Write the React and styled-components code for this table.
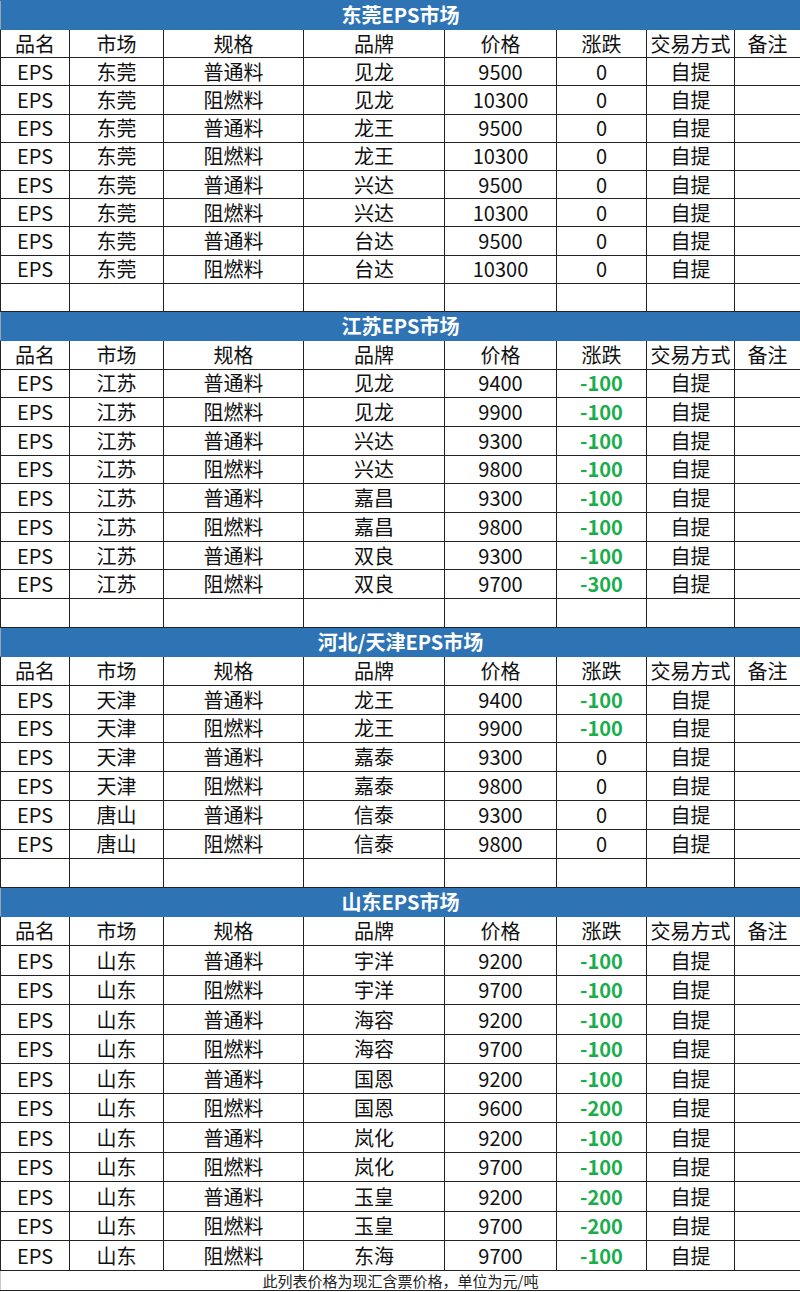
import React from 'react';
import styled, { createGlobalStyle } from 'styled-components';

const GlobalStyle = createGlobalStyle`
  html, body {
    margin: 0;
    padding: 0;
    background: #ffffff;
  }
  body {
    font-family: "Noto Sans CJK SC", "Noto Sans", sans-serif;
  }
`;

const COLS = [69, 94, 140, 141, 112, 90, 88, 66];
const HEAD = ['品名', '市场', '规格', '品牌', '价格', '涨跌', '交易方式', '备注'];

const sections = [
  {
    title: '东莞EPS市场',
    rowH: 28.2,
    rows: [
      ['东莞', '普通料', '见龙', '9500', '0'],
      ['东莞', '阻燃料', '见龙', '10300', '0'],
      ['东莞', '普通料', '龙王', '9500', '0'],
      ['东莞', '阻燃料', '龙王', '10300', '0'],
      ['东莞', '普通料', '兴达', '9500', '0'],
      ['东莞', '阻燃料', '兴达', '10300', '0'],
      ['东莞', '普通料', '台达', '9500', '0'],
      ['东莞', '阻燃料', '台达', '10300', '0'],
    ],
    blank: true,
  },
  {
    title: '江苏EPS市场',
    rowH: 28.7,
    rows: [
      ['江苏', '普通料', '见龙', '9400', '-100'],
      ['江苏', '阻燃料', '见龙', '9900', '-100'],
      ['江苏', '普通料', '兴达', '9300', '-100'],
      ['江苏', '阻燃料', '兴达', '9800', '-100'],
      ['江苏', '普通料', '嘉昌', '9300', '-100'],
      ['江苏', '阻燃料', '嘉昌', '9800', '-100'],
      ['江苏', '普通料', '双良', '9300', '-100'],
      ['江苏', '阻燃料', '双良', '9700', '-300'],
    ],
    blank: true,
  },
  {
    title: '河北/天津EPS市场',
    rowH: 28.9,
    rows: [
      ['天津', '普通料', '龙王', '9400', '-100'],
      ['天津', '阻燃料', '龙王', '9900', '-100'],
      ['天津', '普通料', '嘉泰', '9300', '0'],
      ['天津', '阻燃料', '嘉泰', '9800', '0'],
      ['唐山', '普通料', '信泰', '9300', '0'],
      ['唐山', '阻燃料', '信泰', '9800', '0'],
    ],
    blank: true,
  },
  {
    title: '山东EPS市场',
    rowH: 29.5,
    rows: [
      ['山东', '普通料', '宇洋', '9200', '-100'],
      ['山东', '阻燃料', '宇洋', '9700', '-100'],
      ['山东', '普通料', '海容', '9200', '-100'],
      ['山东', '阻燃料', '海容', '9700', '-100'],
      ['山东', '普通料', '国恩', '9200', '-100'],
      ['山东', '阻燃料', '国恩', '9600', '-200'],
      ['山东', '普通料', '岚化', '9200', '-100'],
      ['山东', '阻燃料', '岚化', '9700', '-100'],
      ['山东', '普通料', '玉皇', '9200', '-200'],
      ['山东', '阻燃料', '玉皇', '9700', '-200'],
      ['山东', '阻燃料', '东海', '9700', '-100'],
    ],
    blank: false,
  },
];

export default function App() {
  return (
    <>
      <GlobalStyle />
      <Sheet>
        <colgroup>
          {COLS.map((w, i) => <col key={i} style={{ width: w }} />)}
        </colgroup>
        {sections.map((s) => (
          <tbody key={s.title}>
            <TitleRow>
              <TitleCell colSpan={8}>{s.title}</TitleCell>
            </TitleRow>
            <Row $h={s.rowH}>
              {HEAD.map((h) => <Cell key={h}>{h}</Cell>)}
            </Row>
            {s.rows.map((r, i) => (
              <Row key={i} $h={s.rowH}>
                <Cell>EPS</Cell>
                <Cell>{r[0]}</Cell>
                <Cell>{r[1]}</Cell>
                <Cell>{r[2]}</Cell>
                <Cell>{r[3]}</Cell>
                <Cell $down={r[4] !== '0'}>{r[4]}</Cell>
                <Cell>自提</Cell>
                <Cell />
              </Row>
            ))}
            {s.blank && (
              <Row $h={s.rowH}>
                {HEAD.map((h) => <Cell key={h} />)}
              </Row>
            )}
          </tbody>
        ))}
        <tbody>
          <FootRow>
            <FootCell colSpan={8}>此列表价格为现汇含票价格，单位为元/吨</FootCell>
          </FootRow>
        </tbody>
      </Sheet>
    </>
  );
}

const Sheet = styled.table`
  width: 800px;
  table-layout: fixed;
  border-collapse: collapse;
  color: #111;
`;

const Row = styled.tr`
  height: ${(p) => p.$h}px;
`;

const TitleRow = styled.tr`
  height: 29px;
`;

const FootRow = styled.tr`
  height: 20px;
`;

const Cell = styled.td`
  border: 1px solid #222;
  padding: 0;
  text-align: center;
  vertical-align: middle;
  font-size: 20px;
  line-height: 1;
  white-space: nowrap;
  overflow: hidden;
  color: ${(p) => (p.$down ? '#1aad4b' : '#111')};
  font-weight: ${(p) => (p.$down ? 700 : 400)};
`;

const TitleCell = styled.td`
  background: #2e74b5;
  color: #ffffff;
  border: 1px solid #2e74b5;
  border-left-color: #9aa4ad;
  padding: 0;
  text-align: center;
  vertical-align: middle;
  font-size: 20px;
  font-weight: 700;
  line-height: 1;
`;

const FootCell = styled.td`
  border: 1px solid #222;
  border-left-color: #c8c8c8;
  padding: 0;
  text-align: center;
  vertical-align: middle;
  font-size: 15px;
  line-height: 1;
  color: #222;
`;
